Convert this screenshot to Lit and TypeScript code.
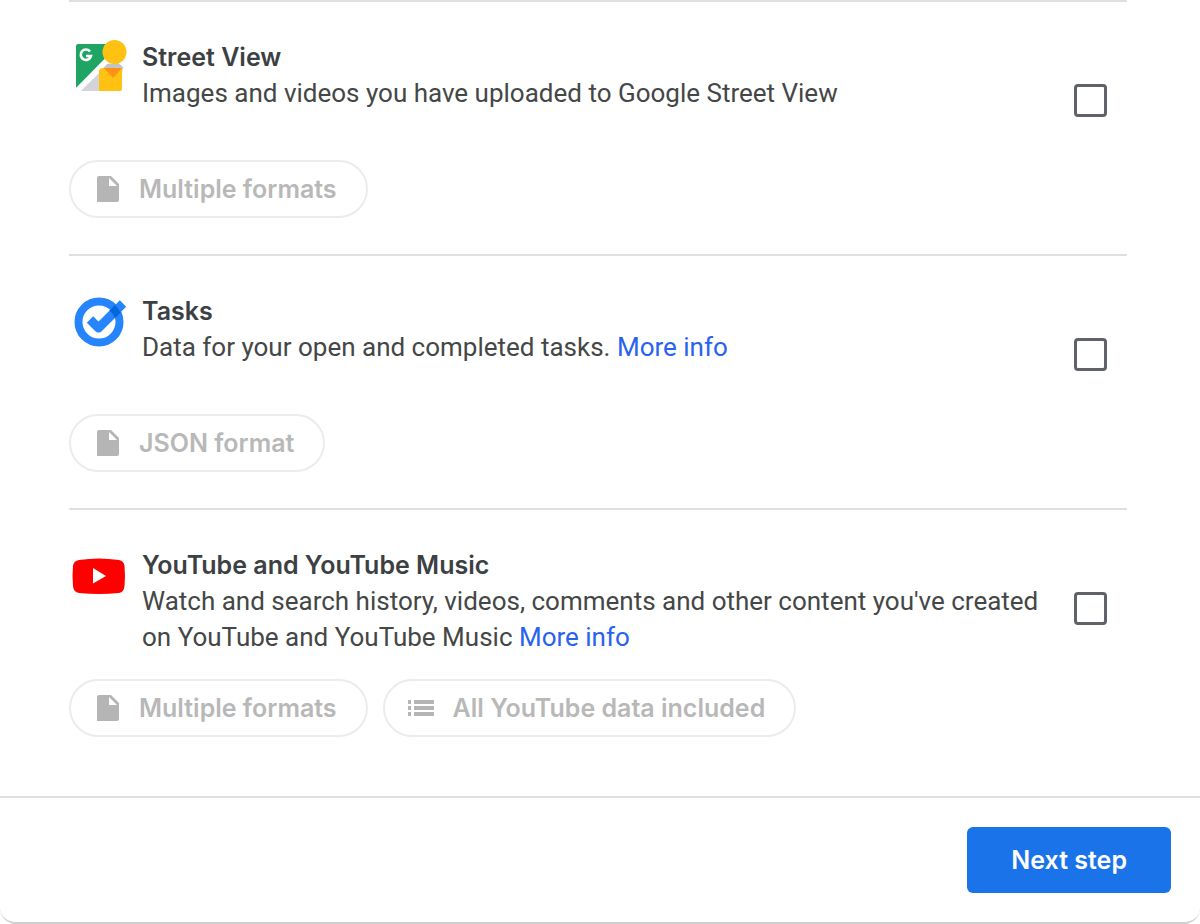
import { LitElement, html, css, svg, nothing, type TemplateResult } from "lit";
import { customElement, property } from "lit/decorators.js";

interface Product {
  id: string;
  name: string;
  description: string;
  moreInfo: boolean;
  icon: TemplateResult;
  chips: { icon: "file" | "list"; label: string }[];
}

const streetView = html`<svg viewBox="0 0 56 56" aria-hidden="true">
  <path d="M8 52 32 29 46 24 50 30V34H27V52z" fill="#d3d3d8" />
  <path d="M4 7Q4 5 6 5H47L4 49z" fill="#1fa463" />
  <path d="M4 49 34 20 35 26 9 52H6Q4 52 4 50z" fill="#fff" />
  <path d="M35 25 46 24 51 28 50 34H27z" fill="#c4c4c4" />
  <path d="M27 33Q27 29 31 29H50V50Q50 52 48 52H27z" fill="#ffc112" />
  <path d="M32 29H50L41 39z" fill="#ff9214" />
  <circle cx="42.500" cy="13" r="12" fill="#ffc112" />
  <path d="M18 12.500A5.200 5.200 0 1 0 19 17H14" fill="none" stroke="#fff" stroke-width="2.600" />
</svg>`;

const tasks = html`<svg viewBox="0 0 56 56" aria-hidden="true">
  <circle cx="27" cy="29" r="20.500" fill="none" stroke="#2684fc" stroke-width="8" />
  <path d="M18 26.500 26.500 35 51 10.500" fill="none" stroke="#2684fc" stroke-width="9" stroke-linejoin="round" />
  <path d="M37.500 17.500 43 12A24 24 0 0 1 48.500 19.500L43 25A17 17 0 0 0 37.500 17.500z" fill="#0066da" />
</svg>`;

const youTube = html`<svg viewBox="1 -1 56 56" aria-hidden="true">
  <path d="M8 12Q28 9 48 12 53 13 53.500 18 54.500 28 53.500 38 53 44 48 45 28 47 8 45 2.500 44 2 38 1 28 2 18 2.500 13 8 12z" fill="#f00" />
  <path d="M22 20 35 28 22 35.500z" fill="#fff" />
</svg>`;

const chipIcons = {
  file: svg`<path d="M4 3Q4 1 6 1H18L26 9V25Q26 27 24 27H4zM16 3V11H24z" fill-rule="evenodd" />`,
  list: svg`<path d="M1 6h3v4H1zM7 6h20v4H7zM1 12h3v4H1zM7 12h20v4H7zM1 18h3v4H1zM7 18h20v4H7z" />`,
};

const products: Product[] = [
  {
    id: "street-view",
    name: "Street View",
    description: "Images and videos you have uploaded to Google Street View",
    moreInfo: false,
    icon: streetView,
    chips: [{ icon: "file", label: "Multiple formats" }],
  },
  {
    id: "tasks",
    name: "Tasks",
    description: "Data for your open and completed tasks.",
    moreInfo: true,
    icon: tasks,
    chips: [{ icon: "file", label: "JSON format" }],
  },
  {
    id: "youtube",
    name: "YouTube and YouTube Music",
    description:
      "Watch and search history, videos, comments and other content you've created on YouTube and YouTube Music",
    moreInfo: true,
    icon: youTube,
    chips: [
      { icon: "file", label: "Multiple formats" },
      { icon: "list", label: "All YouTube data included" },
    ],
  },
];

@customElement("product-row")
class ProductRow extends LitElement {
  @property({ attribute: false }) product!: Product;

  static styles = css`
    :host {
      display: block;
      border-top: 2px solid #dfe0e2;
      padding: 37px 0 36px;
    }
    .head {
      display: flex;
      align-items: flex-start;
      min-height: 97px;
      margin-bottom: 24px;
    }
    .icon {
      flex: none;
      width: 56px;
      height: 56px;
      margin: 0 14px 0 3px;
    }
    .icon svg {
      display: block;
    }
    .text {
      flex: 1;
      min-width: 0;
    }
    .name {
      display: block;
      font: 600 25px/36px Inter, sans-serif;
      color: #3c4043;
    }
    .description {
      margin: 0;
      font-size: 26px;
      line-height: 36px;
      color: #444746;
    }
    a {
      color: #2962f0;
      text-decoration: none;
    }
    .box {
      appearance: none;
      flex: none;
      box-sizing: border-box;
      width: 33px;
      height: 33px;
      margin: 45px 20px 0 20px;
      border: 3px solid #5f6368;
      border-radius: 4px;
      background: #fff;
    }
    .box:checked {
      background: #1a73e8;
      border-color: #1a73e8;
    }
    .chips {
      display: flex;
      flex-wrap: wrap;
      gap: 15px;
    }
    .chip {
      display: flex;
      align-items: center;
      gap: 18px;
      box-sizing: border-box;
      height: 58px;
      padding: 0 29px 0 22px;
      border: 2px solid #ececec;
      border-radius: 29px;
      background: #fff;
      font: 600 25px/36px Inter, sans-serif;
      color: #b8b8b8;
    }
    .chip svg {
      width: 28px;
      height: 28px;
      fill: #b5b5b5;
    }
  `;

  render() {
    const p = this.product;
    return html`
      <div class="head">
        <div class="icon">${p.icon}</div>
        <div class="text">
          <label class="name" for=${p.id}>${p.name}</label>
          <p class="description">
            ${p.description} ${p.moreInfo ? html`<a href="#${p.id}">More info</a>` : nothing}
          </p>
        </div>
        <input class="box" type="checkbox" id=${p.id} />
      </div>
      <div class="chips">
        ${p.chips.map(
          (c) => html`<button class="chip" type="button" disabled>
            <svg viewBox="0 0 28 28" aria-hidden="true">${chipIcons[c.icon]}</svg>
            <span>${c.label}</span>
          </button>`
        )}
      </div>
    `;
  }
}

@customElement("app-root")
class AppRoot extends LitElement {
  static styles = css`
    :host {
      display: block;
      background: #fff;
      font-family: Roboto, sans-serif;
    }
    .card {
      border-bottom: 2px solid #cfcfcf;
      border-radius: 0 0 16px 16px;
      background: #fff;
    }
    .list {
      padding: 0 73px 23px 69px;
    }
    .footer {
      display: flex;
      justify-content: flex-end;
      padding: 29px 29px;
      border-top: 2px solid #dfe0e2;
    }
    .next {
      height: 66px;
      padding: 0 44px;
      border: 0;
      border-radius: 6px;
      background: #1a73e8;
      color: #fff;
      font: 600 25px/36px Inter, sans-serif;
    }
  `;

  render() {
    return html`
      <main class="card">
        <div class="list">${products.map((p) => html`<product-row .product=${p}></product-row>`)}</div>
        <div class="footer"><button class="next" type="button">Next step</button></div>
      </main>
    `;
  }
}
